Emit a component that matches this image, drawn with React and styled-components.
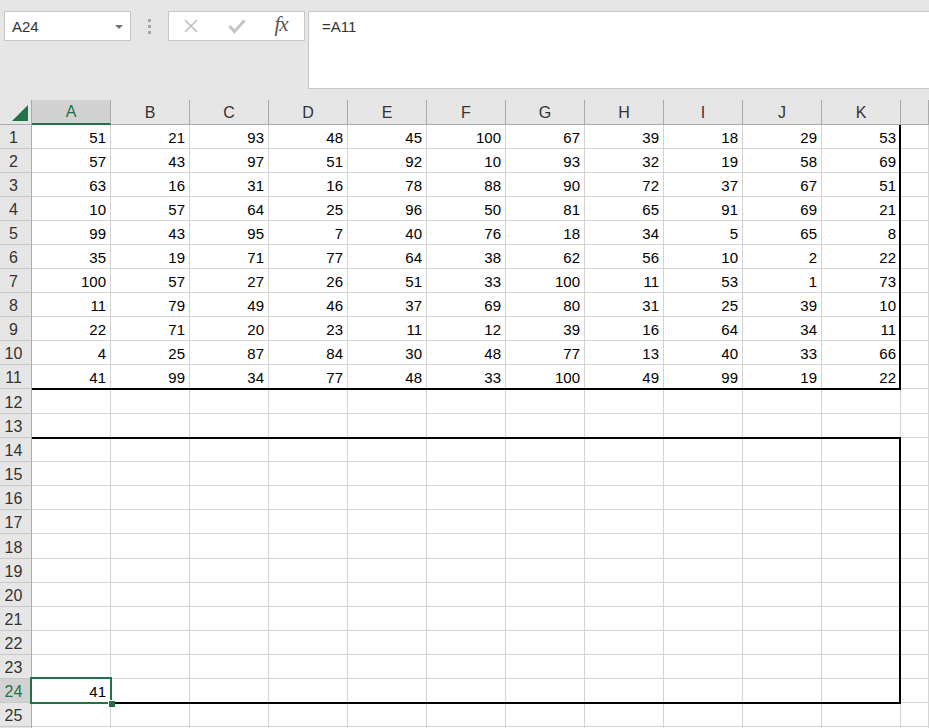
import React from "react";
import styled, { createGlobalStyle } from "styled-components";

const GlobalStyle = createGlobalStyle`
  html, body {
    margin: 0;
    padding: 0;
    background: #fff;
    overflow: hidden;
  }
  body {
    font-family: "Liberation Sans", Arial, sans-serif;
  }
`;

const DATA = [
    [51, 21, 93, 48, 45, 100, 67, 39, 18, 29, 53],
    [57, 43, 97, 51, 92, 10, 93, 32, 19, 58, 69],
    [63, 16, 31, 16, 78, 88, 90, 72, 37, 67, 51],
    [10, 57, 64, 25, 96, 50, 81, 65, 91, 69, 21],
    [99, 43, 95, 7, 40, 76, 18, 34, 5, 65, 8],
    [35, 19, 71, 77, 64, 38, 62, 56, 10, 2, 22],
    [100, 57, 27, 26, 51, 33, 100, 11, 53, 1, 73],
    [11, 79, 49, 46, 37, 69, 80, 31, 25, 39, 10],
    [22, 71, 20, 23, 11, 12, 39, 16, 64, 34, 11],
    [4, 25, 87, 84, 30, 48, 77, 13, 40, 33, 66],
    [41, 99, 34, 77, 48, 33, 100, 49, 99, 19, 22],
];

const COLS = ["A", "B", "C", "D", "E", "F", "G", "H", "I", "J", "K", ""];
const ROW_COUNT = 26;
const LAST_LABEL = 25;
const SELECTED_ROW = 24;

const Page = styled.div`
    width: 929px;
    height: 728px;
    overflow: hidden;
`;

const Toolbar = styled.div`
    display: flex;
    align-items: flex-start;
    height: 100px;
    box-sizing: border-box;
    padding: 11px 0 0 4px;
    background: #e6e6e6;
`;

const NameBox = styled.div`
    display: flex;
    align-items: center;
    justify-content: space-between;
    width: 127px;
    height: 30px;
    box-sizing: border-box;
    padding: 0 7px 0 7px;
    background: #fff;
    border: 1px solid #c6c6c6;
    font-size: 15px;
    color: #333;
`;

const Caret = styled.span`
    width: 0;
    height: 0;
    border-left: 4px solid transparent;
    border-right: 4px solid transparent;
    border-top: 4px solid #707070;
    margin-top: 1px;
`;

const Grip = styled.div`
    display: flex;
    flex-direction: column;
    gap: 3px;
    margin: 8px 17px 0 17px;

    span {
        width: 3px;
        height: 3px;
        background: #a6a6a6;
    }
`;

const ButtonBox = styled.div`
    display: flex;
    align-items: center;
    width: 137px;
    height: 30px;
    box-sizing: border-box;
    padding-left: 14px;
    background: #fff;
    border: 1px solid #c6c6c6;
`;

const IconButton = styled.div`
    display: flex;
    align-items: center;
    justify-content: center;
    width: ${p => p.$w}px;
    margin-left: ${p => p.$gap}px;
    height: 28px;
`;

const Fx = styled.span`
    font-family: "Liberation Serif", "Times New Roman", serif;
    font-style: italic;
    font-size: 21px;
    color: #555;
    letter-spacing: -1px;
    margin-top: -3px;
`;

const FormulaBar = styled.div`
    flex: 1;
    height: 78px;
    margin-left: 3px;
    box-sizing: border-box;
    padding: 6px 0 0 13px;
    background: #fff;
    border: 1px solid #c6c6c6;
    border-right: none;
    font-size: 15px;
    color: #333;
`;

const Sheet = styled.div`
    display: grid;
    grid-template-columns: 32px repeat(11, 79px) 1fr;
    grid-template-rows: 25px repeat(11, 24px) 25px repeat(5, 24px) 25px repeat(7, 24px);
    font-family: "Liberation Sans", Arial, sans-serif;
    font-size: 15px;
`;

const Corner = styled.div`
    grid-row: 1;
    grid-column: 1;
    position: relative;
    background: #e6e6e6;
    border-right: 1px solid #ababab;
    border-bottom: 1px solid #ababab;
`;

const CornerTriangle = styled.div`
    position: absolute;
    right: 3px;
    bottom: 3px;
    width: 0;
    height: 0;
    border-left: 16px solid transparent;
    border-bottom: 16px solid #217346;
`;

const ColHeader = styled.div`
    grid-row: 1;
    grid-column: ${p => p.$c};
    display: flex;
    align-items: center;
    justify-content: center;
    padding-top: 1px;
    background: ${p => (p.$active ? "#d2d2d2" : "#e6e6e6")};
    color: ${p => (p.$active ? "#217346" : "#333")};
    border-right: 1px solid #ababab;
    border-bottom: ${p => (p.$active ? "2px solid #217346" : "1px solid #ababab")};
    box-sizing: border-box;
    font-size: 16px;
`;

const RowHeader = styled.div`
    grid-row: ${p => p.$r};
    grid-column: 1;
    display: flex;
    align-items: center;
    justify-content: center;
    padding: 3px 4px 0 0;
    background: ${p => (p.$active ? "#d2d2d2" : "#e6e6e6")};
    color: ${p => (p.$active ? "#217346" : "#333")};
    border-right: 1px solid #ababab;
    border-bottom: 1px solid #c8c8c8;
    font-size: 16px;
`;

const Cell = styled.div`
    grid-row: ${p => p.$r};
    grid-column: ${p => p.$c};
    display: flex;
    align-items: center;
    justify-content: flex-end;
    padding: 1px 4px 0 0;
    border-right: 1px solid #d4d4d4;
    border-bottom: 1px solid #d4d4d4;
    color: #000;
`;

const RangeOutline = styled.div`
    grid-row: ${p => p.$rows};
    grid-column: 2 / 13;
    z-index: 2;
    pointer-events: none;
    border-right: 2px solid #000;
    border-bottom: 2px solid #000;
    border-top: ${p => (p.$top ? "2px solid #000" : "none")};
    margin-top: ${p => (p.$top ? "-1px" : "0")};
    margin-bottom: -1px;
`;

const Selection = styled.div`
    grid-row: ${SELECTED_ROW + 1};
    grid-column: 2;
    position: relative;
    z-index: 3;
    pointer-events: none;
    border: 2px solid #217346;
    margin: -2px -1px -1px -2px;
`;

const FillHandle = styled.div`
    position: absolute;
    right: -5px;
    bottom: -5px;
    width: 6px;
    height: 6px;
    background: #217346;
    border-left: 1px solid #fff;
    border-top: 1px solid #fff;
`;

const CrossIcon = () => (
    <svg width="16" height="16" viewBox="0 0 16 16">
        <path d="M2 2 L14 14 M14 2 L2 14" stroke="#bdbdbd" strokeWidth="1.6" fill="none" />
    </svg>
);

const CheckIcon = () => (
    <svg width="18" height="16" viewBox="0 0 18 16">
        <path d="M1.5 8 L6.5 13.5 L16.5 2.5" stroke="#c4c4c4" strokeWidth="3" fill="none" />
    </svg>
);

const App = () => {
    const rows = [];
    for (let r = 1; r <= ROW_COUNT; r++) {
        rows.push(
            <RowHeader key={"h" + r} $r={r + 1} $active={r === SELECTED_ROW}>
                {r <= LAST_LABEL ? r : ""}
            </RowHeader>
        );
        for (let c = 0; c < COLS.length; c++) {
            let value = "";
            if (r <= DATA.length && c < 11) value = DATA[r - 1][c];
            if (r === SELECTED_ROW && c === 0) value = 41;
            rows.push(
                <Cell key={r + "-" + c} $r={r + 1} $c={c + 2}>
                    {value}
                </Cell>
            );
        }
    }

    return (
        <>
            <GlobalStyle />
            <Page>
                <Toolbar>
                    <NameBox>
                        A24
                        <Caret />
                    </NameBox>
                    <Grip>
                        <span />
                        <span />
                        <span />
                    </Grip>
                    <ButtonBox>
                        <IconButton $w={16} $gap={0}><CrossIcon /></IconButton>
                        <IconButton $w={18} $gap={29}><CheckIcon /></IconButton>
                        <IconButton $w={20} $gap={25}><Fx>fx</Fx></IconButton>
                    </ButtonBox>
                    <FormulaBar>=A11</FormulaBar>
                </Toolbar>
                <Sheet>
                    <Corner>
                        <CornerTriangle />
                    </Corner>
                    {COLS.map((col, i) => (
                        <ColHeader key={"c" + i} $c={i + 2} $active={i === 0}>
                            {col}
                        </ColHeader>
                    ))}
                    {rows}
                    <RangeOutline $rows="2 / 13" />
                    <RangeOutline $rows="15 / 26" $top />
                    <Selection>
                        <FillHandle />
                    </Selection>
                </Sheet>
            </Page>
        </>
    );
};

export default App;
